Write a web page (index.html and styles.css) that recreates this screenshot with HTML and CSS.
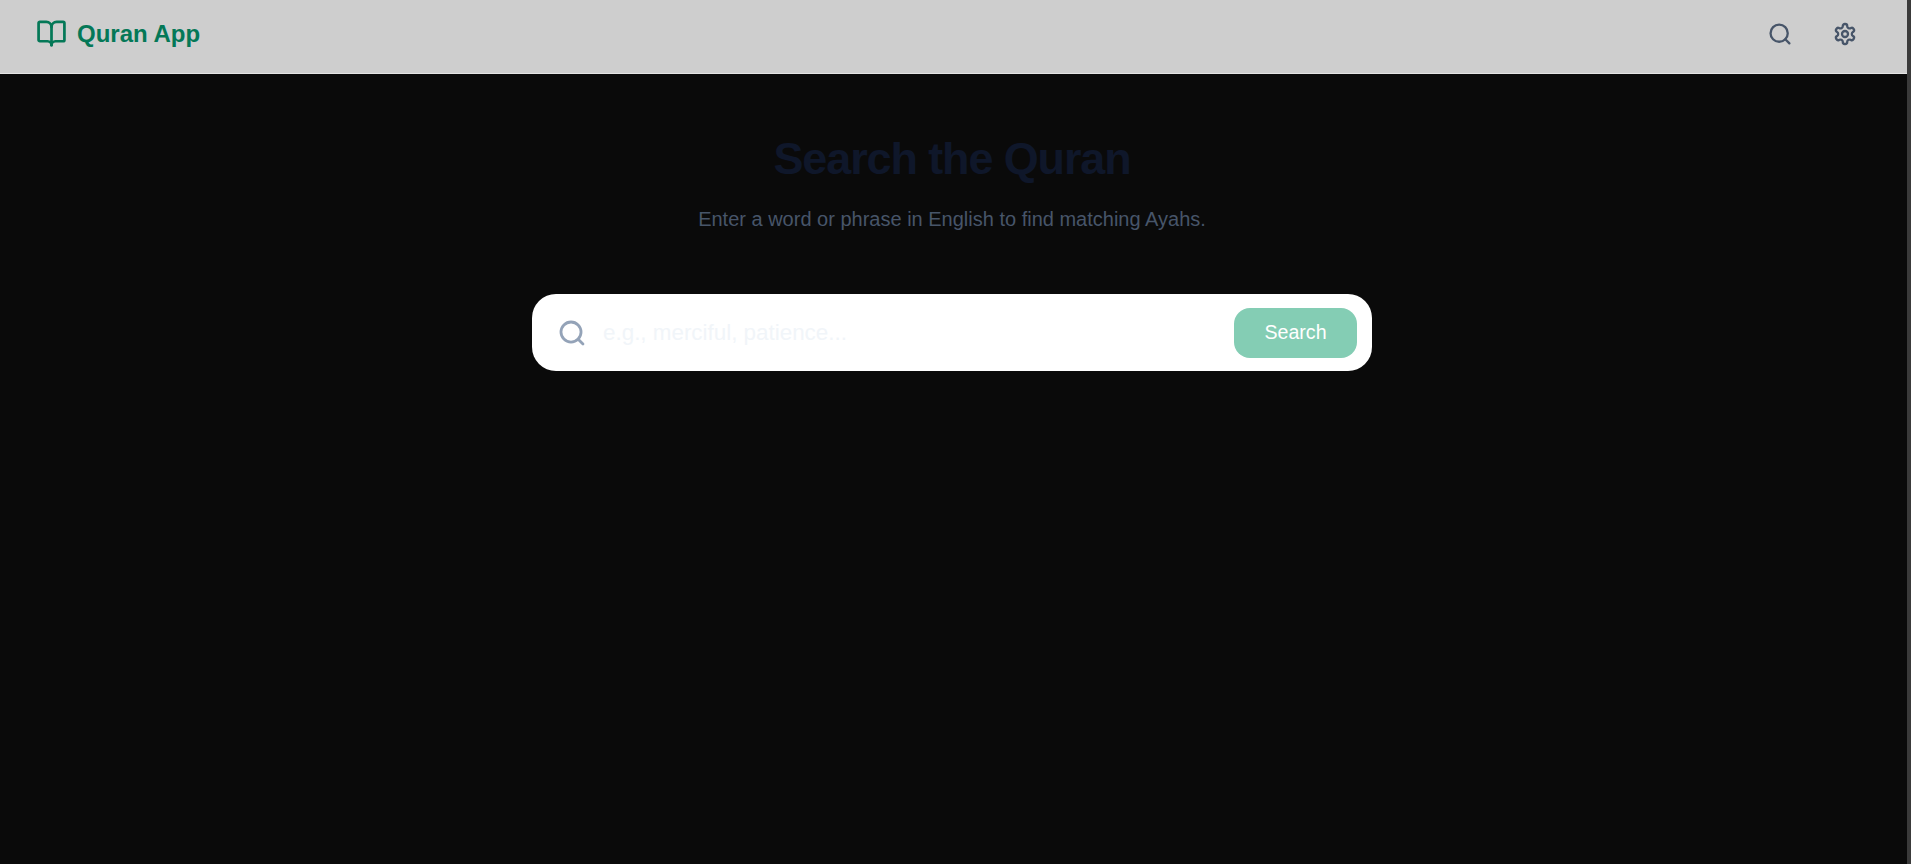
FILE: index.html
```html
<!DOCTYPE html>
<html lang="en">
<head>
<meta charset="utf-8">
<title>Quran App</title>
<link rel="stylesheet" href="styles.css">
</head>
<body>
<div class="page">
  <header class="topbar">
    <a class="brand" href="#">
      <svg class="brand-icon" viewBox="0 0 24 24" fill="none" stroke="currentColor" stroke-width="2.1" stroke-linecap="round" stroke-linejoin="round"><path d="M12 7v14"/><path d="M3 18a1 1 0 0 1-1-1V4a1 1 0 0 1 1-1h5a4 4 0 0 1 4 4 4 4 0 0 1 4-4h5a1 1 0 0 1 1 1v13a1 1 0 0 1-1 1h-6a3 3 0 0 0-3 3 3 3 0 0 0-3-3z"/></svg>
      <span>Quran App</span>
    </a>
    <nav class="actions">
      <button class="icon-btn" type="button" aria-label="Search">
        <svg viewBox="0 0 24 24" fill="none" stroke="currentColor" stroke-width="2.3" stroke-linecap="round" stroke-linejoin="round"><circle cx="11.15" cy="11.15" r="8.6"/><path d="M17.3 17.3 21.4 21.4"/></svg>
      </button>
      <button class="icon-btn" type="button" aria-label="Settings">
        <svg viewBox="0 0 24 24" fill="none" stroke="currentColor" stroke-width="2.3" stroke-linecap="round" stroke-linejoin="round"><path d="M12.22 2h-.44a2 2 0 0 0-2 2v.18a2 2 0 0 1-1 1.73l-.43.25a2 2 0 0 1-2 0l-.15-.08a2 2 0 0 0-2.73.73l-.22.38a2 2 0 0 0 .73 2.73l.15.1a2 2 0 0 1 1 1.72v.51a2 2 0 0 1-1 1.74l-.15.09a2 2 0 0 0-.73 2.73l.22.38a2 2 0 0 0 2.73.73l.15-.08a2 2 0 0 1 2 0l.43.25a2 2 0 0 1 1 1.73V20a2 2 0 0 0 2 2h.44a2 2 0 0 0 2-2v-.18a2 2 0 0 1 1-1.73l.43-.25a2 2 0 0 1 2 0l.15.08a2 2 0 0 0 2.73-.73l.22-.39a2 2 0 0 0-.73-2.73l-.15-.08a2 2 0 0 1-1-1.74v-.5a2 2 0 0 1 1-1.74l.15-.09a2 2 0 0 0 .73-2.73l-.22-.38a2 2 0 0 0-2.73-.73l-.15.08a2 2 0 0 1-2 0l-.43-.25a2 2 0 0 1-1-1.73V4a2 2 0 0 0-2-2z"/><circle cx="12" cy="12" r="3"/></svg>
      </button>
    </nav>
  </header>
  <main class="content">
    <h1 class="title">Search the Quran</h1>
    <p class="subtitle">Enter a word or phrase in English to find matching Ayahs.</p>
    <form class="search-card">
      <svg class="search-icon" viewBox="0 0 24 24" fill="none" stroke="currentColor" stroke-width="2.4" stroke-linecap="round" stroke-linejoin="round"><circle cx="11.15" cy="11.15" r="8.6"/><path d="M17.3 17.3 21.4 21.4"/></svg>
      <input class="search-input" type="text" placeholder="e.g., merciful, patience...">
      <button class="search-btn" type="button">Search</button>
    </form>
  </main>
</div>
</body>
</html>
```
FILE: styles.css
```css
* { box-sizing: border-box; }
html, body { margin: 0; height: 100%; }
body {
  background: #3a3a3a;
  font-family: "Liberation Sans", Arial, sans-serif;
  overflow: hidden;
}
.page {
  width: 1907px;
  height: 864px;
  background: #0a0a0a;
}
.topbar {
  height: 74px;
  background: #cecece;
  border-bottom: 1px solid #e5e5e5;
  padding: 0 42px 6px 36px;
  display: flex;
  align-items: center;
  justify-content: space-between;
}
.brand {
  display: flex;
  align-items: center;
  gap: 10px;
  color: #047857;
  font-size: 24px;
  font-weight: 700;
  text-decoration: none;
}
.brand-icon { width: 31px; height: 31px; }
.actions { display: flex; gap: 25px; }
.icon-btn {
  width: 40px;
  height: 40px;
  padding: 8px;
  border: 0;
  background: transparent;
  color: #475569;
  display: flex;
}
.icon-btn svg { width: 24px; height: 24px; }
.content {
  padding: 61px 3px 0 0;
  display: flex;
  flex-direction: column;
  align-items: center;
}
.title {
  margin: 0;
  font-size: 45px;
  line-height: 48px;
  letter-spacing: -0.025em;
  font-weight: 700;
  color: #0f172a;
}
.subtitle {
  margin: 22px 0 0;
  font-size: 20px;
  line-height: 28px;
  color: #475569;
}
.search-card {
  width: 840px;
  height: 77px;
  margin-top: 61px;
  background: #fff;
  border-radius: 24px;
  padding: 0 15px 0 26px;
  display: flex;
  align-items: center;
}
.search-icon { width: 28px; height: 28px; color: #94a3b8; flex: none; }
.search-input {
  flex: 1;
  min-width: 0;
  height: 40px;
  margin-left: 17px;
  padding: 0;
  border: 0;
  outline: 0;
  background: transparent;
  font-family: inherit;
  font-size: 22.4px;
}
.search-input::placeholder { color: #f1f5f9; opacity: 1; }
.search-btn {
  width: 123px;
  height: 50px;
  border: 0;
  border-radius: 16px;
  background: #84cdb4;
  color: #fff;
  font-family: inherit;
  font-size: 19.6px;
}
```
